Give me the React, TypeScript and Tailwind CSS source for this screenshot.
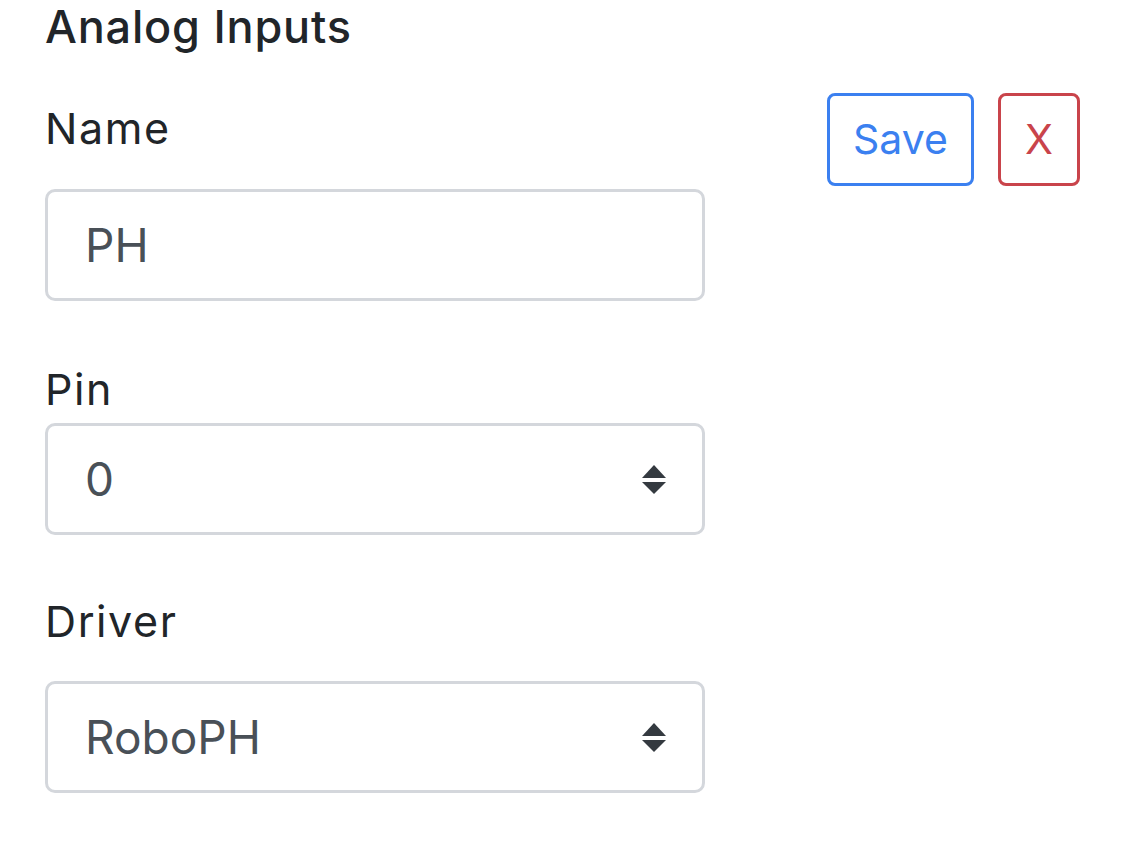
import React, { useState } from 'react';

const SelectArrow: React.FC = () => (
  <svg
    width="24"
    height="30"
    viewBox="0 0 24 30"
    className="pointer-events-none absolute right-[39px] top-1/2 -translate-y-1/2"
  >
    <path d="M0 14 L12 1 L24 14 Z" fill="#343a40" />
    <path d="M0 18 L24 18 L12 30 Z" fill="#343a40" />
  </svg>
);

const fieldClass =
  "w-full h-[112px] rounded-[10px] border-[3px] border-[#d4d7dc] bg-white pl-[37px] pr-[80px] text-[46px] text-[#495057] outline-none appearance-none";

const labelClass = "block text-[43px] leading-[48px] tracking-[1.6px] text-[#212529]";

const App: React.FC = () => {
  const [name, setName] = useState("PH");
  const [pin, setPin] = useState("0");
  const [driver, setDriver] = useState("RoboPH");

  return (
    <div className="w-full h-[848px] bg-white px-[45px] font-['Inter',sans-serif]">
      <h5 className="mt-[1px] text-[45px] leading-[52px] tracking-[0.8px] font-medium text-[#212529]">
        Analog Inputs
      </h5>

      <div className="mt-[40px] flex items-start justify-between">
        <div className="w-[660px]">
          <label className={`${labelClass} mt-[11px]`}>Name</label>
          <input
            className={`${fieldClass} mt-[37px]`}
            value={name}
            onChange={(e) => setName(e.target.value)}
          />
        </div>
        <div className="flex gap-[24px]">
          <button className="w-[147px] h-[93px] rounded-[8px] border-[3px] border-[#3b80f0] text-[41px] text-[#3b80f0] bg-white">
            Save
          </button>
          <button className="w-[82px] h-[93px] rounded-[8px] border-[3px] border-[#c9444b] text-[41px] text-[#c9444b] bg-white">
            X
          </button>
        </div>
      </div>

      <div className="w-[660px]">
        <label className={`${labelClass} mt-[64px]`}>Pin</label>
        <div className="relative mt-[10px]">
          <select
            className={fieldClass}
            value={pin}
            onChange={(e) => setPin(e.target.value)}
          >
            {["0", "1", "2", "3", "4", "5"].map((p) => (
              <option key={p} value={p}>
                {p}
              </option>
            ))}
          </select>
          <SelectArrow />
        </div>

        <label className={`${labelClass} mt-[62px]`}>Driver</label>
        <div className="relative mt-[36px]">
          <select
            className={fieldClass}
            value={driver}
            onChange={(e) => setDriver(e.target.value)}
          >
            <option value="RoboPH">RoboPH</option>
          </select>
          <SelectArrow />
        </div>
      </div>
    </div>
  );
};

export default App;
